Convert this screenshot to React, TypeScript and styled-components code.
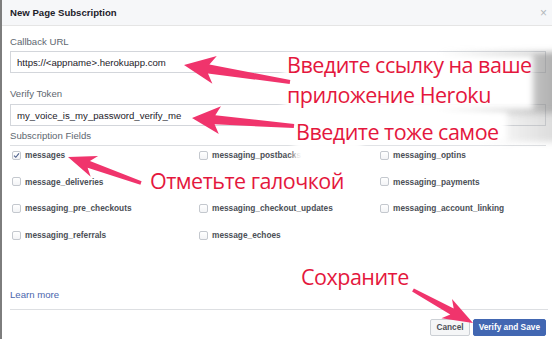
import React from 'react';
import styled, { createGlobalStyle } from 'styled-components';

const GlobalStyle = createGlobalStyle`
  html, body { margin: 0; padding: 0; background: #fff; }
  body { font-family: "Liberation Sans", Arial, sans-serif; }
`;

const Page = styled.div`
  position: relative;
  width: 552px;
  height: 339px;
  overflow: hidden;
`;

const Frame = styled.div`
  width: 552px;
  height: 339px;
  box-sizing: border-box;
  border-left: 2px solid #7d7d7d;
  display: flex;
  flex-direction: column;
  background: #fff;
`;

const Header = styled.div`
  height: 26px;
  box-sizing: border-box;
  border-bottom: 1px solid #e5e5e5;
  background: #f6f7f9;
  display: flex;
  align-items: center;
  justify-content: space-between;
  padding: 0 5px 0 8px;
`;

const Title = styled.h1`
  margin: 0;
  font-size: 9.6px;
  font-weight: bold;
  color: #1d2129;
`;

const Close = styled.span`
  color: #b4b7bc;
  font-size: 12px;
  line-height: 1;
`;

const Body = styled.div`
  flex: 1;
  display: flex;
  flex-direction: column;
  padding: 0 6px 8px 8px;
`;

const FieldLabel = styled.div<{ $mt: number }>`
  margin-top: ${(p) => p.$mt}px;
  font-size: 9.6px;
  line-height: 12px;
  color: #606770;
`;

const Input = styled.div<{ $mt: number }>`
  margin-top: ${(p) => p.$mt}px;
  height: 22px;
  box-sizing: border-box;
  border: 1px solid #d3d6db;
  padding: 0 6px;
  display: flex;
  align-items: center;
  font-size: 9.6px;
  color: #1d2129;
`;

const SectionLabel = styled(FieldLabel)`
  padding-bottom: 3.5px;
  border-bottom: 1px solid #dddfe2;
`;

const Grid = styled.div`
  margin-top: 2px;
  display: grid;
  grid-template-columns: 187px 181px 1fr;
  grid-auto-rows: 14px;
  row-gap: 12.7px;
`;

const Option = styled.label`
  display: flex;
  align-items: center;
  gap: 4px;
  padding-left: 2px;
  font-size: 8.3px;
  font-weight: bold;
  color: #4b4f56;
  white-space: nowrap;
`;

const Box = styled.span`
  width: 9px;
  height: 9px;
  box-sizing: border-box;
  border: 1px solid #c4c8ce;
  border-radius: 2px;
  background: linear-gradient(#fff, #f3f4f6);
  display: flex;
  align-items: center;
  justify-content: center;
`;

const LearnMore = styled.a`
  margin-top: auto;
  font-size: 9.6px;
  line-height: 12px;
  color: #4a66ad;
  text-decoration: none;
`;

const Footer = styled.div`
  margin: 0 4px 0 8px;
  border-top: 1px solid #dddfe2;
  padding: 9px 2px 0 0;
  height: 30px;
  box-sizing: border-box;
  display: flex;
  justify-content: flex-end;
  align-items: flex-start;
  gap: 3px;
`;

const Button = styled.button<{ $primary?: boolean }>`
  height: 17px;
  margin: 0;
  padding: 0 5px;
  border-radius: 2px;
  font-family: "Liberation Sans", Arial, sans-serif;
  font-size: 8.3px;
  line-height: 15px;
  font-weight: bold;
  border: 1px solid ${(p) => (p.$primary ? '#4267b2' : '#ccd0d5')};
  background: ${(p) => (p.$primary ? '#4267b2' : '#f5f6f7')};
  color: ${(p) => (p.$primary ? '#fff' : '#4b4f56')};
`;

/* ---------- annotation overlay ---------- */

const Overlay = styled.div`
  position: absolute;
  inset: 0;
  pointer-events: none;
`;

const Smudge = styled.div<{ $l: number; $t: number; $w: number; $h: number; $c: string }>`
  position: absolute;
  left: ${(p) => p.$l}px;
  top: ${(p) => p.$t}px;
  width: ${(p) => p.$w}px;
  height: ${(p) => p.$h}px;
  background: ${(p) => p.$c};
  filter: blur(3px);
`;

const Note = styled.div<{ $l: number; $t: number; $size: number }>`
  position: absolute;
  left: ${(p) => p.$l}px;
  top: ${(p) => p.$t}px;
  font-family: "Open Sans", "Noto Sans", sans-serif;
  font-size: ${(p) => p.$size}px;
  line-height: 1;
  letter-spacing: -0.5px;
  color: #e4173d;
  white-space: nowrap;
`;

const ArrowSvg = styled.svg`
  position: absolute;
  left: 0;
  top: 0;
  overflow: visible;
`;

type Pt = [number, number];

function arrowPoints(
  tip: Pt,
  tail: Pt,
  headLen: number,
  headHalf: number,
  notch: number,
  neckHalf: number,
  tailHalf: number
): string {
  const dx = tail[0] - tip[0];
  const dy = tail[1] - tip[1];
  const L = Math.hypot(dx, dy);
  const ux = dx / L;
  const uy = dy / L;
  const px = -uy;
  const py = ux;
  const at = (d: number, w: number) =>
    `${(tip[0] + ux * d + px * w).toFixed(1)},${(tip[1] + uy * d + py * w).toFixed(1)}`;
  return [
    at(0, 0),
    at(headLen, headHalf),
    at(notch, neckHalf),
    at(L, tailHalf),
    at(L, -tailHalf),
    at(notch, -neckHalf),
    at(headLen, -headHalf),
  ].join(' ');
}

const arrows: { tip: Pt; tail: Pt; hl: number; hh: number; n: number; nh: number; th: number }[] = [
  { tip: [184, 65], tail: [290, 82], hl: 31, hh: 14, n: 25, nh: 4.5, th: 2 },
  { tip: [192, 118], tail: [294, 126], hl: 28, hh: 14, n: 23, nh: 4.5, th: 2 },
  { tip: [68, 157], tail: [141, 183], hl: 28, hh: 11, n: 22, nh: 3.5, th: 1.8 },
  { tip: [473, 323], tail: [413, 290], hl: 30, hh: 11, n: 24, nh: 3.5, th: 1.8 },
];

const options = [
  'messages',
  'messaging_postbacks',
  'messaging_optins',
  'message_deliveries',
  '',
  'messaging_payments',
  'messaging_pre_checkouts',
  'messaging_checkout_updates',
  'messaging_account_linking',
  'messaging_referrals',
  'message_echoes',
];

export default function App() {
  return (
    <>
      <GlobalStyle />
      <Page>
        <Frame>
          <Header>
            <Title>New Page Subscription</Title>
            <Close>×</Close>
          </Header>
          <Body>
            <FieldLabel $mt={9.5}>Callback URL</FieldLabel>
            <Input $mt={3.5}>https://&lt;appname&gt;.herokuapp.com</Input>
            <FieldLabel $mt={15}>Verify Token</FieldLabel>
            <Input $mt={4}>my_voice_is_my_password_verify_me</Input>
            <SectionLabel $mt={3.5}>Subscription Fields</SectionLabel>
            <Grid>
              {options.map((o, i) =>
                o ? (
                  <Option key={i}>
                    <Box>
                      {i === 0 && (
                        <svg width="7" height="7" viewBox="0 0 7 7">
                          <path d="M1 3.6 L2.8 5.3 L6 1.4" fill="none" stroke="#4c5f8a" strokeWidth="1.1" />
                        </svg>
                      )}
                    </Box>
                    {o}
                  </Option>
                ) : (
                  <span key={i} />
                )
              )}
            </Grid>
            <LearnMore href="#">Learn more</LearnMore>
          </Body>
          <Footer>
            <Button>Cancel</Button>
            <Button $primary>Verify and Save</Button>
          </Footer>
        </Frame>
        <Overlay>
          <Smudge $l={440} $t={52} $w={130} $h={62} $c="linear-gradient(90deg, rgba(255,255,255,0), rgba(150,150,150,0.55) 70%, rgba(120,120,120,0.7))" />
          <Smudge $l={480} $t={112} $w={90} $h={30} $c="linear-gradient(90deg, rgba(255,255,255,0), rgba(170,170,170,0.5))" />
          <Smudge $l={283} $t={55} $w={250} $h={54} $c="#fff" />
          <Smudge $l={292} $t={112} $w={215} $h={30} $c="#fff" />
          <Smudge $l={294} $t={136} $w={68} $h={28} $c="rgba(255,255,255,0.95)" />
          <Smudge $l={146} $t={171} $w={205} $h={24} $c="#fff" />
          <Smudge $l={298} $t={260} $w={120} $h={30} $c="#fff" />
          <Note $l={287} $t={53.5} $size={21.5}>Введите ссылку на ваше</Note>
          <Note $l={287} $t={83.5} $size={21.5}>приложение Heroku</Note>
          <Note $l={296} $t={120.7} $size={21.5}>Введите тоже самое</Note>
          <Note $l={150} $t={170.3} $size={21.5}>Отметьте галочкой</Note>
          <Note $l={301} $t={265.5} $size={21.5}>Сохраните</Note>
          <ArrowSvg width="552" height="339" viewBox="0 0 552 339">
            {arrows.map((a, i) => (
              <polygon
                key={i}
                points={arrowPoints(a.tip, a.tail, a.hl, a.hh, a.n, a.nh, a.th)}
                fill="#f0346c"
              />
            ))}
          </ArrowSvg>
        </Overlay>
      </Page>
    </>
  );
}
